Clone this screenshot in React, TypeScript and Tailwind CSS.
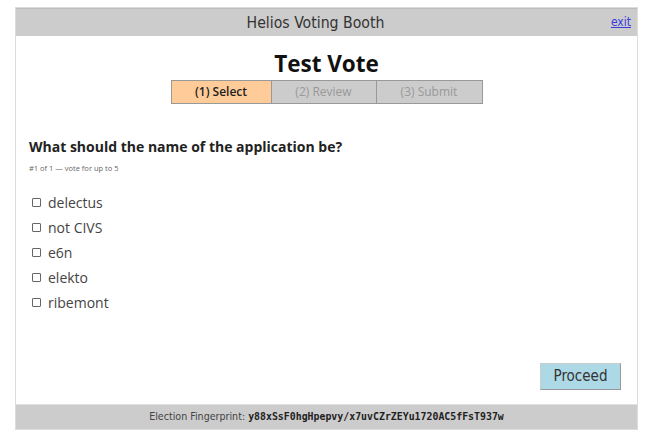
const options = ['delectus', 'not CIVS', 'e6n', 'elekto', 'ribemont']

const steps = [
  { label: '(1) Select', active: true, w: 'w-[99px]' },
  { label: '(2) Review', active: false, w: 'w-[105px]' },
  { label: '(3) Submit', active: false, w: 'w-[106px]' },
]

export default function App() {
  return (
    <div className="w-[650px] h-[435px] bg-white pt-[7px] pl-[15px]">
      <div className="w-[623px] border border-[#dcdcdc] flex flex-col">
        {/* Header */}
        <div className="relative h-[28px] bg-[#cccccc] border-t border-[#bdbdbd] flex items-center justify-center pr-[22px]">
          <span className="text-[15.7px] text-[#333] font-['DejaVu_Sans_Condensed','DejaVu_Sans',sans-serif] [font-stretch:condensed]">
            Helios Voting Booth
          </span>
          <a href="#" className="absolute right-[6px] top-[4px] text-[12px] text-[#3b3bdd] underline font-['DejaVu_Sans_Condensed','DejaVu_Sans',sans-serif] [font-stretch:condensed]">
            exit
          </a>
        </div>

        {/* Body */}
        <div className="h-[368px] flex flex-col font-['Open_Sans',sans-serif]">
          <h1 className="mt-[14px] text-center text-[22.5px] leading-[27px] font-bold text-[#111]">Test Vote</h1>
          <div className="mt-[3px] mx-auto flex border border-[#999] h-[24px] text-[12px]">
            {steps.map((s, i) => (
              <div
                key={s.label}
                className={`${s.w} flex items-center justify-center ${
                  s.active ? 'bg-[#ffcc99] text-[#222] font-semibold' : 'bg-[#cccccc] text-[#999]'
                } ${i > 0 ? 'border-l border-[#999]' : ''}`}
              >
                {s.label}
              </div>
            ))}
          </div>

          <div className="pl-[13px] mt-[33px]">
            <h2 className="text-[14px] leading-[20px] font-bold text-[#222]">What should the name of the application be?</h2>
            <div className="mt-[6px] text-[7.5px] text-[#666]">#1 of 1 — vote for up to 5</div>
            <div className="mt-[19px] flex flex-col gap-[7px]">
              {options.map((o) => (
                <label key={o} className="flex items-center h-[18px] text-[14px] text-[#444]">
                  <span className="ml-[3px] mr-[7px] w-[9px] h-[9px] border border-[#666] rounded-[1px] bg-white" />
                  {o}
                </label>
              ))}
            </div>
          </div>

          <div className="mt-auto mb-[14px] flex justify-end pr-[16px]">
            <button className="w-[81px] h-[27px] bg-[#add8e6] border border-[#999] border-t-[#ccc] border-l-[#ccc] text-[15px] text-[#333] font-['DejaVu_Sans_Condensed','DejaVu_Sans',sans-serif] [font-stretch:condensed]">
              Proceed
            </button>
          </div>
        </div>

        {/* Footer */}
        <div className="h-[25px] bg-[#cccccc] border-t border-[#e0e0e0] flex items-center justify-center text-[10.6px] text-[#444]">
          <span className="font-['DejaVu_Sans_Condensed','DejaVu_Sans',sans-serif] [font-stretch:condensed]">Election Fingerprint:&nbsp;</span>
          <span className="font-['DejaVu_Sans_Mono',monospace] font-bold text-[9.9px] text-[#222]">
            y88xSsF0hgHpepvy/x7uvCZrZEYu1720AC5fFsT937w
          </span>
        </div>
      </div>
    </div>
  )
}
